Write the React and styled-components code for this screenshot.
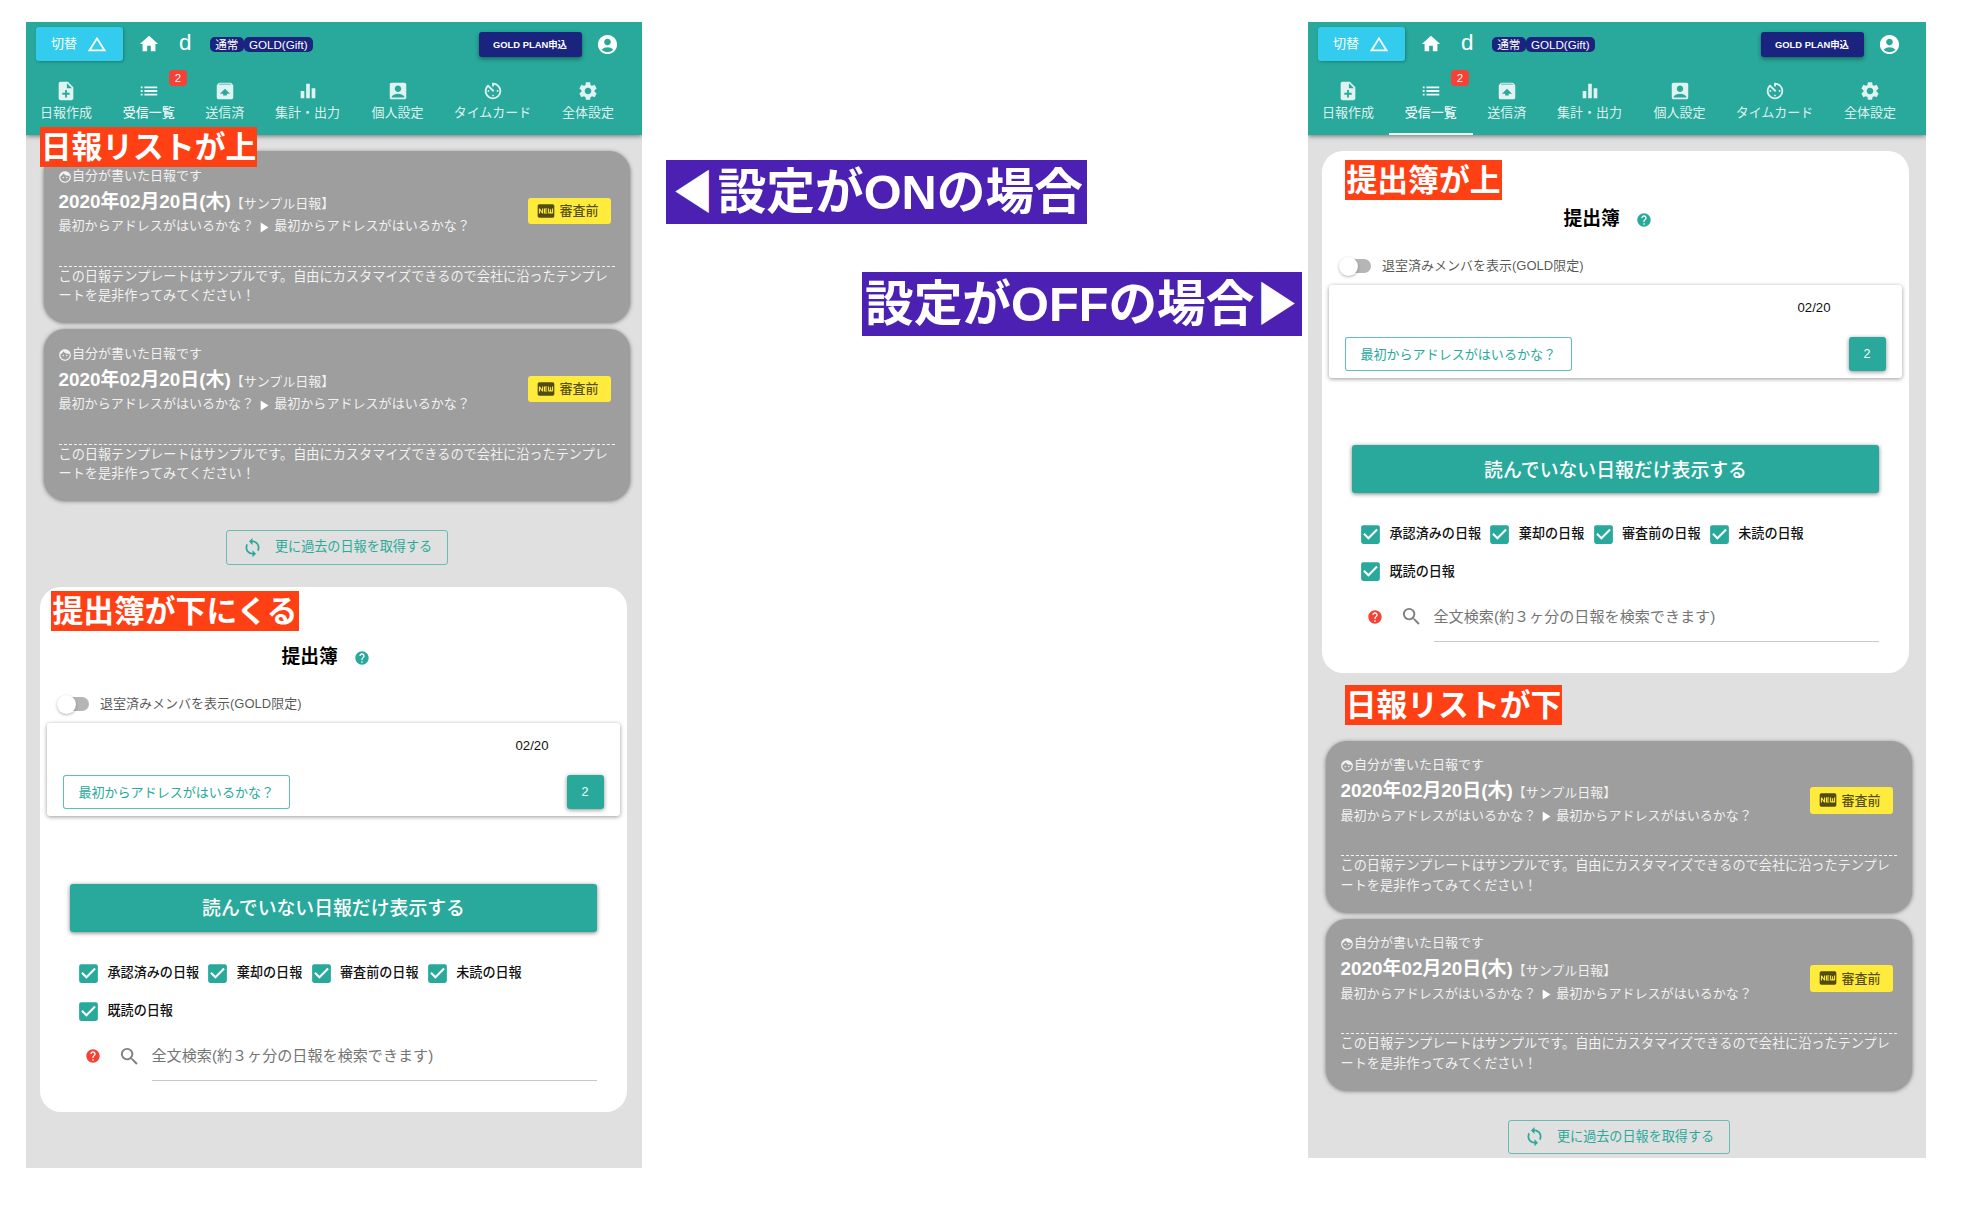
import React from "react";
import styled, { createGlobalStyle, css } from "styled-components";
import {
  MdAccountBox,
  MdAccountCircle,
  MdAvTimer,
  MdChangeHistory,
  MdCheckBox,
  MdEqualizer,
  MdFace,
  MdFiberNew,
  MdHelp,
  MdHome,
  MdList,
  MdLoop,
  MdNoteAdd,
  MdPlayArrow,
  MdSearch,
  MdSettings,
  MdUnarchive,
} from "react-icons/md";

const teal = "#28a99b";
const navy = "#1a237e";

const GlobalStyle = createGlobalStyle`
  *, *::before, *::after { box-sizing: border-box; }
  body {
    margin: 0;
    background: #fff;
    font-family: "Liberation Sans", "Noto Sans CJK JP", sans-serif;
    font-size: 13px;
    line-height: 20px;
    color: #111;
  }
  button { font-family: inherit; padding: 0; border: 0; cursor: pointer; }
  svg { display: block; flex: none; }
`;

const Page = styled.main`
  display: grid;
  grid-template-columns: 616px 666px 618px;
  align-items: start;
  width: 1962px;
  height: 1210px;
  padding: 22px 0 0 26px;
  overflow: hidden;
`;

const Panel = styled.section`
  position: relative;
  height: ${(p) => p.$height}px;
  background: #e0e0e0;
  overflow: hidden;
`;

/* ---------- header ---------- */

const Header = styled.header`
  height: 113px;
  background: ${teal};
  color: #fff;
  box-shadow: 0 1px 5px rgba(0, 0, 0, 0.5);
`;

const TopBar = styled.div`
  display: flex;
  align-items: center;
  height: 44px;
  padding-left: 10px;
`;

const SwitchButton = styled.button`
  display: flex;
  align-items: center;
  justify-content: space-between;
  width: 86.5px;
  height: 34px;
  padding: 0 15px;
  border-radius: 3px;
  background: #33cbee;
  color: #fff;
  font-size: 13px;
  line-height: 32px;
  box-shadow: 1px 1px 3px rgba(0, 0, 0, 0.25);
`;

const HomeLink = styled.span`
  margin-left: 15.5px;
`;

const UserName = styled.span`
  margin: -3px 0 0 19px;
  font-size: 22.5px;
  line-height: 30px;
`;

const Chips = styled.div`
  display: flex;
  margin: 1px 0 0 18px;
`;

const Chip = styled.span`
  width: ${(p) => p.$width}px;
  height: 15px;
  border-radius: 5px;
  background: ${navy};
  font-size: 11.6px;
  line-height: 15px;
  text-align: center;
  white-space: nowrap;
`;

const PlanButton = styled.button`
  width: 103px;
  height: 25px;
  margin: 1px 14.5px 0 auto;
  border-radius: 3px;
  background: ${navy};
  color: #fff;
  font-size: 9.4px;
  font-weight: 700;
  line-height: 25px;
  white-space: nowrap;
  box-shadow: 0 2px 4px rgba(0, 0, 0, 0.4);
`;

const Account = styled.span`
  margin-right: ${(p) => p.$right}px;
`;

const Tabs = styled.nav`
  display: flex;
  height: 69px;
`;

const Tab = styled.div`
  position: relative;
  display: flex;
  flex-direction: column;
  align-items: center;
  width: ${(p) => p.$width}px;
  padding-top: 14px;
  color: rgba(255, 255, 255, ${(p) => (p.$active ? 0.96 : 0.86)});
  &:first-child { padding-right: 1px; }
  ${(p) =>
    p.$underlined &&
    css`
      box-shadow: inset 0 -2px 0 rgba(255, 255, 255, 0.9);
    `}
`;

const TabLabel = styled.span`
  margin-top: 1px;
  font-weight: ${(p) => (p.$active ? 500 : 400)};
  line-height: 20px;
  white-space: nowrap;
`;

const Count = styled.span`
  position: absolute;
  top: 4px;
  left: 62px;
  width: 18px;
  height: 16px;
  border-radius: 4px;
  background: #f44336;
  font-size: 11.5px;
  line-height: 16px;
  text-align: center;
`;

/* ---------- report list ---------- */

const ReportList = styled.div`
  display: flex;
  flex-direction: column;
  gap: 7px;
  padding: ${(p) => p.$top}px 0 0 17.5px;
`;

const ReportCard = styled.article`
  width: 586px;
  height: 171px;
  padding: 14.5px 15px 0 15px;
  border-radius: 21px;
  background: #9e9e9e;
  color: rgba(255, 255, 255, 0.88);
  box-shadow: 0 1px 4px rgba(0, 0, 0, 0.5);
`;

const ReportHead = styled.div`
  display: flex;
  justify-content: space-between;
  height: 101px;
  border-bottom: 1px dashed rgba(255, 255, 255, 0.88);
`;

const Author = styled.div`
  display: flex;
  align-items: center;
  height: 20px;
  svg { margin: 2px 0 0 -0.5px; }
`;

const DateLine = styled.div`
  height: 32px;
  line-height: 32px;
  white-space: nowrap;
`;

const ReportDate = styled.strong`
  font-size: 18.9px;
  color: #fff;
`;

const Route = styled.div`
  display: flex;
  align-items: center;
  height: 17px;
  font-size: 13.05px;
  white-space: nowrap;
  svg { margin: 2px 2px 0 1px; color: #fff; }
`;

const Status = styled.span`
  display: flex;
  align-items: center;
  gap: 4px;
  width: 83px;
  height: 26.5px;
  margin: 32px 4px 0 0;
  padding-left: 8px;
  border-radius: 3px;
  background: #ffeb3b;
  color: rgba(0, 0, 0, 0.68);
  font-weight: 500;
  line-height: 25px;
`;

const ReportBody = styled.p`
  margin: 0;
  font-size: 13.16px;
  line-height: 19.8px;
  white-space: nowrap;
`;

const MoreButton = styled.button`
  display: flex;
  align-items: center;
  gap: 12px;
  width: 222px;
  height: 34.5px;
  margin: 30px 0 0 200px;
  padding-left: 15px;
  border: 1px solid rgba(40, 169, 155, 0.65);
  border-radius: 3px;
  background: transparent;
  color: ${teal};
  font-size: 13.1px;
  white-space: nowrap;
  line-height: 30px;
`;

/* ---------- submission book ---------- */

const Book = styled.section`
  width: 587px;
  height: ${(p) => (p.$compact ? 522.5 : 525)}px;
  margin: ${(p) => p.$top}px 0 0 14px;
  padding-top: ${(p) => (p.$compact ? 54.5 : 56)}px;
  border-radius: 21px;
  background: #fff;
`;

const BookTitle = styled.h2`
  display: flex;
  align-items: center;
  height: 28px;
  margin: 0;
  padding-left: 241.5px;
  font-size: 18.8px;
  font-weight: 700;
  color: #000;
  svg { margin: 2px 0 0 16.5px; color: ${teal}; }
`;

const ToggleRow = styled.label`
  display: flex;
  align-items: center;
  height: 28px;
  margin-top: 19px;
  padding-left: 19px;
  color: rgba(0, 0, 0, 0.68);
`;

const Track = styled.span`
  display: flex;
  align-items: center;
  width: 30px;
  height: 14px;
  margin-right: 11px;
  border-radius: 7px;
  background: #b5b5b5;
`;

const Knob = styled.span`
  width: 19px;
  height: 19px;
  margin-left: -2px;
  border-radius: 50%;
  background: #fff;
  box-shadow: 0 1px 3px rgba(0, 0, 0, 0.3);
`;

const Sheet = styled.div`
  width: 572.5px;
  height: 92.5px;
  margin: 5px 0 0 7px;
  padding: 12.5px 16px 0 15.5px;
  border-radius: 3px;
  background: #fff;
  box-shadow: 0 1px 4px rgba(0, 0, 0, 0.4);
`;

const SheetDate = styled.div`
  padding-right: 55px;
  font-size: 13.2px;
  text-align: right;
`;

const SheetRow = styled.div`
  display: flex;
  justify-content: space-between;
  margin-top: 19.5px;
`;

const MemberButton = styled.button`
  width: 227.5px;
  height: 34px;
  padding-bottom: 1px;
  border: 1px solid rgba(40, 169, 155, 0.75);
  border-radius: 3px;
  background: #fff;
  color: ${teal};
  font-size: 13.05px;
  white-space: nowrap;
`;

const CountButton = styled.button`
  width: 37px;
  height: 34px;
  border-radius: 3px;
  background: ${teal};
  color: #fff;
  font-size: 12.5px;
  box-shadow: 0 1px 4px rgba(0, 0, 0, 0.45);
`;

const UnreadButton = styled.button`
  display: block;
  width: 527px;
  height: 48px;
  margin: ${(p) => (p.$compact ? 67.5 : 68)}px 0 0 30px;
  padding-bottom: 2px;
  border-radius: 3px;
  background: ${teal};
  color: #fff;
  font-size: 18.85px;
  font-weight: 500;
  box-shadow: 0 1px 4px rgba(0, 0, 0, 0.5);
`;

const Filters = styled.div`
  display: flex;
  flex-wrap: wrap;
  column-gap: 6.2px;
  width: 527px;
  margin: 22.5px 0 0 36px;
`;

const Filter = styled.label`
  display: flex;
  align-items: center;
  gap: 6.5px;
  height: ${(p) => (p.$compact ? 37.5 : 38)}px;
  font-size: 13.1px;
  font-weight: 500;
  color: #111;
  svg { color: ${teal}; }
`;

const SearchRow = styled.div`
  display: flex;
  align-items: center;
  height: 44px;
  margin: 7px 30px 0 45px;
  svg { margin-bottom: 6px; }
`;

const HelpMark = styled.span`
  margin-right: 16.5px;
  color: #f44336;
`;

const SearchMark = styled.span`
  margin-right: 11px;
  color: #808080;
`;

const SearchField = styled.div`
  flex: 1;
  height: 44px;
  border-bottom: 1px solid #c8c8c8;
  font-size: 15.1px;
  line-height: 37px;
  color: #757575;
`;

/* ---------- annotations ---------- */

const Note = styled.span`
  position: absolute;
  left: ${(p) => p.$left}px;
  top: ${(p) => p.$top}px;
  width: ${(p) => p.$width}px;
  height: 40px;
  background: #ff4015;
  color: #fff;
  font-size: 30.8px;
  font-weight: 700;
  line-height: 41px;
  text-align: center;
  white-space: nowrap;
`;

const Captions = styled.div`
  display: flex;
  flex-direction: column;
  gap: 48px;
  padding: 138px 6px 0 24px;
`;

const Caption = styled.div`
  display: flex;
  align-items: center;
  align-self: ${(p) => p.$side};
  width: ${(p) => p.$width}px;
  height: 64px;
  padding: 0 3px;
  background: #4c20b2;
  color: #fff;
  font-size: 48.7px;
  font-weight: 700;
  line-height: 64px;
  white-space: nowrap;
`;

const Pointer = styled.span`
  width: 48.7px;
  font-size: 41px;
  text-align: center;
  transform: scaleY(1.12);
`;

const TABS = [
  { label: "日報作成", icon: MdNoteAdd, width: 81 },
  { label: "受信一覧", icon: MdList, width: 83.5, active: true, count: 2 },
  { label: "送信済", icon: MdUnarchive, width: 68.5 },
  { label: "集計・出力", icon: MdEqualizer, width: 97 },
  { label: "個人設定", icon: MdAccountBox, width: 83 },
  { label: "タイムカード", icon: MdAvTimer, width: 107 },
  { label: "全体設定", icon: MdSettings, width: 84 },
];

const FILTERS = ["承認済みの日報", "棄却の日報", "審査前の日報", "未読の日報", "既読の日報"];

function AppHeader({ underlined, accountRight }) {
  return (
    <Header>
      <TopBar>
        <SwitchButton>
          切替
          <MdChangeHistory size={22} />
        </SwitchButton>
        <HomeLink>
          <MdHome size={22} />
        </HomeLink>
        <UserName>d</UserName>
        <Chips>
          <Chip $width={34.5}>通常</Chip>
          <Chip $width={68.5}>GOLD(Gift)</Chip>
        </Chips>
        <PlanButton>GOLD PLAN申込</PlanButton>
        <Account $right={accountRight}>
          <MdAccountCircle size={23} />
        </Account>
      </TopBar>
      <Tabs>
        {TABS.map(({ label, icon: Icon, width, active, count }) => (
          <Tab key={label} $width={width} $active={active} $underlined={active && underlined}>
            <Icon size={22} />
            <TabLabel $active={active}>{label}</TabLabel>
            {count && <Count>{count}</Count>}
          </Tab>
        ))}
      </Tabs>
    </Header>
  );
}

function Report() {
  return (
    <ReportCard>
      <ReportHead>
        <div>
          <Author>
            <MdFace size={14} />
            自分が書いた日報です
          </Author>
          <DateLine>
            <ReportDate>2020年02月20日(木)</ReportDate>【サンプル日報】
          </DateLine>
          <Route>
            最初からアドレスがはいるかな？
            <MdPlayArrow size={17} />
            最初からアドレスがはいるかな？
          </Route>
        </div>
        <Status>
          <MdFiberNew size={20} />
          審査前
        </Status>
      </ReportHead>
      <ReportBody>
        この日報テンプレートはサンプルです。自由にカスタマイズできるので会社に沿ったテンプレ
        <br />
        ートを是非作ってみてください！
      </ReportBody>
    </ReportCard>
  );
}

function Reports({ top }) {
  return (
    <>
      <ReportList $top={top}>
        <Report />
        <Report />
      </ReportList>
      <MoreButton>
        <MdLoop size={21} />
        更に過去の日報を取得する
      </MoreButton>
    </>
  );
}

function SubmissionBook({ top, compact }) {
  return (
    <Book $top={top} $compact={compact}>
      <BookTitle>
        提出簿
        <MdHelp size={16} />
      </BookTitle>
      <ToggleRow>
        <Track>
          <Knob />
        </Track>
        退室済みメンバを表示(GOLD限定)
      </ToggleRow>
      <Sheet>
        <SheetDate>02/20</SheetDate>
        <SheetRow>
          <MemberButton>最初からアドレスがはいるかな？</MemberButton>
          <CountButton>2</CountButton>
        </SheetRow>
      </Sheet>
      <UnreadButton $compact={compact}>読んでいない日報だけ表示する</UnreadButton>
      <Filters>
        {FILTERS.map((name) => (
          <Filter key={name} $compact={compact}>
            <MdCheckBox size={25} />
            {name}
          </Filter>
        ))}
      </Filters>
      <SearchRow>
        <HelpMark>
          <MdHelp size={16} />
        </HelpMark>
        <SearchMark>
          <MdSearch size={23} />
        </SearchMark>
        <SearchField>全文検索(約３ヶ分の日報を検索できます)</SearchField>
      </SearchRow>
    </Book>
  );
}

export default function App() {
  return (
    <Page lang="ja">
      <GlobalStyle />
      <Panel $height={1146}>
        <AppHeader accountRight={23} />
        <Reports top={16} />
        <SubmissionBook top={22.5} />
        <Note $left={14} $top={105} $width={217}>日報リストが上</Note>
        <Note $left={25} $top={569} $width={248}>提出簿が下にくる</Note>
      </Panel>
      <Captions>
        <Caption $side="flex-start" $width={421}>
          <Pointer>◀</Pointer>設定がONの場合
        </Caption>
        <Caption $side="flex-end" $width={440}>
          設定がOFFの場合<Pointer>▶</Pointer>
        </Caption>
      </Captions>
      <Panel $height={1136}>
        <AppHeader underlined accountRight={25} />
        <SubmissionBook top={15.5} compact />
        <Reports top={67.5} />
        <Note $left={37} $top={138} $width={157}>提出簿が上</Note>
        <Note $left={37} $top={662.5} $width={217}>日報リストが下</Note>
      </Panel>
    </Page>
  );
}
